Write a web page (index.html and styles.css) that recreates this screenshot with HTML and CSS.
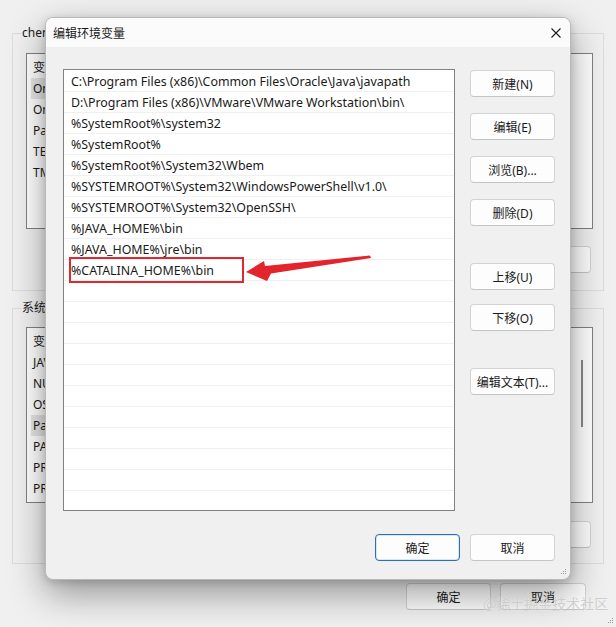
FILE: index.html
```html
<!doctype html>
<html lang="zh-CN">
	<head>
		<meta charset="UTF-8" />
		<meta name="viewport" content="width=device-width, initial-scale=1.0" />
		<title>编辑环境变量</title>
		<link rel="stylesheet" href="styles.css">
	</head>

	<body>
		<!-- the environment variables window behind the dialog -->
		<div class="window">
			<div class="group">
				<div class="group-label">chen 的用户变量(U)</div>
				<div class="varlist">
					<div class="var-rows">
						<div class="var-row">变量</div>
						<div class="var-row selected">OneDrive</div>
						<div class="var-row">OneDriveConsumer</div>
						<div class="var-row">Path</div>
						<div class="var-row">TEMP</div>
						<div class="var-row">TMP</div>
					</div>
				</div>
				<div class="group-buttons"><button class="btn">删除(D)</button></div>
			</div>

			<div class="group group-system">
				<div class="group-label">系统变量(S)</div>
				<div class="varlist">
					<div class="var-rows">
						<div class="var-row">变量</div>
						<div class="var-row">JAVA_HOME</div>
						<div class="var-row">NUMBER_OF_PROCESSORS</div>
						<div class="var-row">OS</div>
						<div class="var-row selected">Path</div>
						<div class="var-row">PATHEXT</div>
						<div class="var-row">PROCESSOR_ARCHITECTURE</div>
						<div class="var-row">PROCESSOR_IDENTIFIER</div>
					</div>
					<div class="scrolltrack"><div class="thumb"></div></div>
				</div>
				<div class="group-buttons"><button class="btn">删除(L)</button></div>
			</div>

			<div class="window-footer">
				<button class="btn">确定</button>
				<button class="btn btn-wide">取消</button>
			</div>
		</div>

		<!-- the edit dialog -->
		<div class="dialog">
			<div class="titlebar">
				<span class="title">编辑环境变量</span>
				<svg class="close" width="10" height="10" viewBox="0 0 10 10">
					<path d="M0.5 0.5 L9.5 9.5 M9.5 0.5 L0.5 9.5" stroke="#1b1b1b" stroke-width="1.1" fill="none" />
				</svg>
			</div>
			<div class="dialog-body">
				<div class="dialog-main">
					<div class="pathlist" id="pathlist"></div>
					<div class="side">
						<div class="side-group">
							<button class="btn">新建(N)</button>
							<button class="btn">编辑(E)</button>
							<button class="btn">浏览(B)...</button>
							<button class="btn">删除(D)</button>
						</div>
						<div class="side-group side-group-tight">
							<button class="btn">上移(U)</button>
							<button class="btn">下移(O)</button>
						</div>
						<div class="side-group">
							<button class="btn">编辑文本(T)...</button>
						</div>
					</div>
				</div>
				<div class="dialog-footer">
					<button class="btn btn-default">确定</button>
					<button class="btn">取消</button>
				</div>
			</div>
			<svg class="grip" width="6" height="6" viewBox="0 0 6 6">
				<rect x="4" y="0" width="1" height="1" fill="#9a9a9a" />
				<rect x="2" y="2" width="1" height="1" fill="#9a9a9a" />
				<rect x="4" y="2" width="1" height="1" fill="#9a9a9a" />
				<rect x="0" y="4" width="1" height="1" fill="#9a9a9a" />
				<rect x="2" y="4" width="1" height="1" fill="#9a9a9a" />
				<rect x="4" y="4" width="1" height="1" fill="#9a9a9a" />
			</svg>
		</div>

		<!-- annotation drawn over the screenshot -->
		<div class="mark-box"></div>
		<svg class="mark-arrow" width="616" height="627" viewBox="0 0 616 627">
			<polygon points="246,272 264,261 265,266 370,255.5 371,258 271,273.5 267,281" fill="#e2242c" />
		</svg>

		<svg class="grip grip-window" width="6" height="6" viewBox="0 0 6 6">
			<rect x="4" y="0" width="1" height="1" fill="#9a9a9a" />
			<rect x="2" y="2" width="1" height="1" fill="#9a9a9a" />
			<rect x="4" y="2" width="1" height="1" fill="#9a9a9a" />
			<rect x="0" y="4" width="1" height="1" fill="#9a9a9a" />
			<rect x="2" y="4" width="1" height="1" fill="#9a9a9a" />
			<rect x="4" y="4" width="1" height="1" fill="#9a9a9a" />
		</svg>
		<div class="watermark">@稀土掘金技术社区</div>

		<script>
			var paths = [
				'C:\\Program Files (x86)\\Common Files\\Oracle\\Java\\javapath',
				'D:\\Program Files (x86)\\VMware\\VMware Workstation\\bin\\',
				'%SystemRoot%\\system32',
				'%SystemRoot%',
				'%SystemRoot%\\System32\\Wbem',
				'%SYSTEMROOT%\\System32\\WindowsPowerShell\\v1.0\\',
				'%SYSTEMROOT%\\System32\\OpenSSH\\',
				'%JAVA_HOME%\\bin',
				'%JAVA_HOME%\\jre\\bin',
				'%CATALINA_HOME%\\bin',
			];
			var list = document.getElementById('pathlist');
			for (var i = 0; i < 21; i++) {
				var row = document.createElement('div');
				row.className = 'path-row';
				row.textContent = paths[i] || '';
				list.appendChild(row);
			}
		</script>
	</body>
</html>
```

FILE: styles.css
```css
* {
	box-sizing: border-box;
}

body {
	margin: 0;
	width: 616px;
	height: 627px;
	overflow: hidden;
	position: relative;
	background-color: #f0f0f0;
	font-family: "Noto Sans", "Noto Sans CJK SC", sans-serif;
	font-size: 12px;
	color: #1a1a1a;
}

.btn {
	width: 85px;
	height: 27px;
	padding: 0;
	font-family: "Noto Sans", "Noto Sans CJK SC", sans-serif;
	font-size: 12px;
	color: #1a1a1a;
	background-color: #fdfdfd;
	border: 1px solid #d3d3d3;
	border-bottom-color: #c4c4c4;
	border-radius: 4px;
}

.btn-wide {
	width: 86px;
}

.btn-default {
	border: 1px solid #2a6fb8;
	box-shadow: inset 0 0 0 1px #d6e6f5;
}

/* background window */

.window {
	padding: 33px 0 0 12px;
}

.group {
	width: 592px;
	height: 258px;
	padding: 0 10px 0 13px;
	border: 1px solid #dcdcdc;
}

.group-system {
	height: 256px;
	margin-top: 17px;
}

.group-label {
	width: max-content;
	margin: -9px 0 0 -5px;
	padding: 0 1px;
	line-height: 16px;
	background-color: #f0f0f0;
}

.varlist {
	display: flex;
	justify-content: space-between;
	height: 176px;
	margin-top: 12px;
	padding: 3px 0 0 4px;
	border: 1px solid #828282;
	background-color: #fff;
	overflow: hidden;
}

.group-system .varlist {
	margin-top: 11px;
}

/* name column; the dialog hides the rest */
.var-rows {
	width: 150px;
}

.var-row {
	height: 21px;
	line-height: 21px;
	padding-left: 2px;
	white-space: nowrap;
}

.var-row.selected {
	background-color: #e5e5e5;
}

.scrolltrack {
	width: 14px;
	padding-left: 3px;
}

.thumb {
	width: 2px;
	height: 67px;
	margin-top: 29px;
	background-color: #8a8a8a;
}

.group-buttons {
	display: flex;
	justify-content: flex-end;
	margin-top: 17px;
	padding-right: 2px;
}

.group-system .group-buttons {
	margin-top: 18px;
}

.window-footer {
	display: flex;
	justify-content: flex-end;
	gap: 9px;
	margin-top: 19px;
	padding-right: 30px;
}

/* dialog */

.dialog {
	position: absolute;
	left: 45px;
	top: 17px;
	width: 526px;
	height: 563px;
	background-color: #f0f0f0;
	border: 1px solid #b9b9b9;
	border-radius: 8px;
	box-shadow: 0 14px 36px rgba(0, 0, 0, 0.38), 0 2px 8px rgba(0, 0, 0, 0.16);
	overflow: hidden;
}

.titlebar {
	display: flex;
	align-items: center;
	justify-content: space-between;
	height: 29px;
	padding: 0 9px 0 7px;
	background-color: #fbfbfb;
}

.title {
	font-size: 12px;
	padding-top: 1px;
}

.close {
	margin-top: 1px;
}

.dialog-body {
	padding: 22px 15px 0 17px;
}

.dialog-main {
	display: flex;
	gap: 15px;
}

.pathlist {
	width: 392px;
	height: 442px;
	padding-top: 1px;
	border: 1px solid #828282;
	background-color: #fff;
	overflow: hidden;
}

.path-row {
	height: 21px;
	padding-left: 7px;
	font-size: 12.4px;
	line-height: 22px;
	border-bottom: 1px solid #f0f0f0;
	white-space: nowrap;
}

.side {
	display: flex;
	flex-direction: column;
	gap: 37px;
	padding-top: 1px;
}

.side-group {
	display: flex;
	flex-direction: column;
	gap: 16px;
}

.side-group-tight {
	gap: 14px;
}

.dialog-footer {
	display: flex;
	justify-content: flex-end;
	gap: 10px;
	margin-top: 23px;
}

.grip {
	position: absolute;
	right: 3px;
	bottom: 4px;
}

.grip-window {
	right: 2px;
	bottom: 3px;
}

/* red annotation */

.mark-box {
	position: absolute;
	left: 69px;
	top: 257px;
	width: 175px;
	height: 26px;
	border: 2px solid #dc2a30;
}

.mark-arrow {
	position: absolute;
	left: 0;
	top: 0;
	pointer-events: none;
}

.watermark {
	position: absolute;
	left: 483px;
	top: 593px;
	font-family: "Noto Sans CJK SC", sans-serif;
	font-size: 14px;
	line-height: 20px;
	color: rgba(160, 160, 160, 0.5);
	text-shadow: 0 0 1px rgba(255, 255, 255, 0.9);
}
```
